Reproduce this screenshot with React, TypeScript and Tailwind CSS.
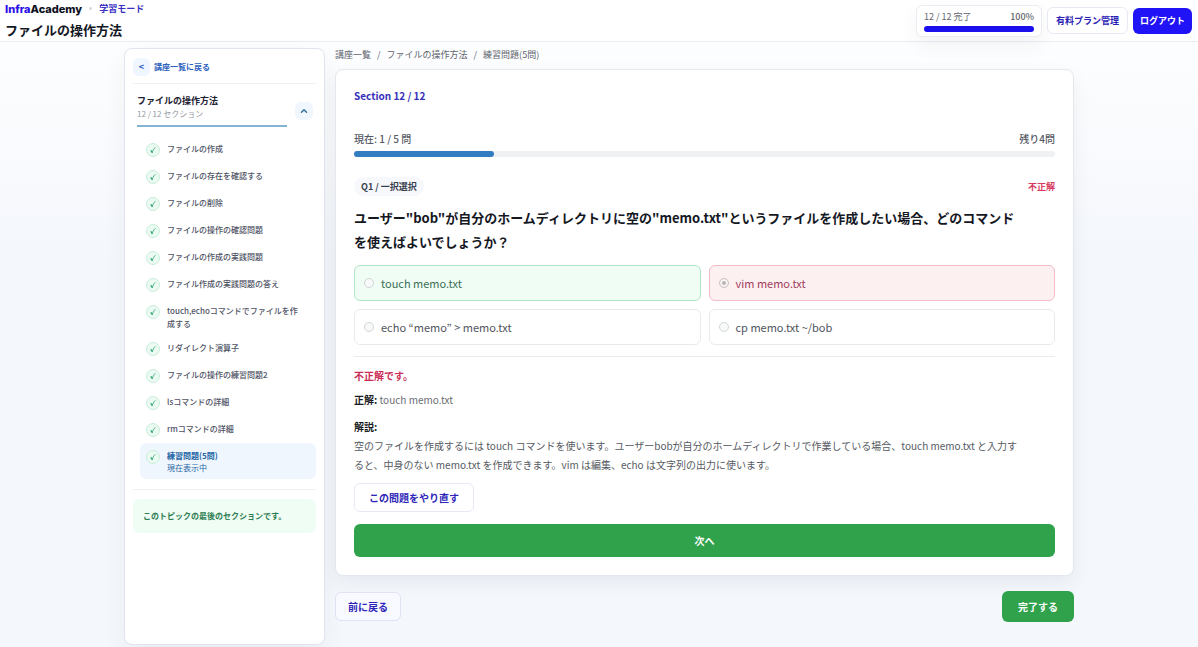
import React, { useState } from 'react';
import { ChevronUp } from 'lucide-react';
import clsx from 'clsx';

const sections = [
  'ファイルの作成',
  'ファイルの存在を確認する',
  'ファイルの削除',
  'ファイルの操作の確認問題',
  'ファイルの作成の実践問題',
  'ファイル作成の実践問題の答え',
  'touch,echoコマンドでファイルを作成する',
  'リダイレクト演算子',
  'ファイルの操作の練習問題2',
  'lsコマンドの詳細',
  'rmコマンドの詳細',
  '練習問題(5問)',
];

const options = [
  { label: 'touch memo.txt', state: 'correct' },
  { label: 'vim memo.txt', state: 'wrong' },
  { label: 'echo “memo” > memo.txt', state: 'idle' },
  { label: 'cp memo.txt ~/bob', state: 'idle' },
];

function Header() {
  return (
    <header className="flex h-[42px] items-center justify-between border-b border-[#e8edf3] bg-white pl-[5px] pr-1.5">
      <div className="pt-0.5">
        <div className="flex h-4 items-center gap-[7px]">
          <a href="#home" className="font-[Inter,sans-serif] text-[11px] font-extrabold leading-4 text-[#0f1222]">
            <span className="text-[#2a10e8]">Infra</span>Academy
          </a>
          <span className="size-[3px] rounded-full bg-[#d3d7de]" />
          <span className="text-[9px] font-bold text-[#3a32c4]">学習モード</span>
        </div>
        <h1 className="text-[13px] font-bold leading-[26px] text-[#141824]">ファイルの操作方法</h1>
      </div>

      <div className="flex items-center gap-[5px]">
        <div className="w-[126px] rounded-md border border-[#e9edf3] bg-white px-[7px] py-1 shadow-[0_8px_20px_rgba(15,23,42,0.05)]">
          <div className="flex justify-between text-[9px] leading-[14px] text-[#64666e]">
            <span>12 / 12 完了</span>
            <span className="font-medium">100%</span>
          </div>
          <div className="mt-0.5 h-1.5 rounded-full bg-[#1c0fee]" />
        </div>
        <a
          href="#plan"
          className="rounded-md border border-[#e7eaf3] bg-white px-2 py-1.5 text-[9px] font-bold leading-[13px] text-[#2a20b4]"
        >
          有料プラン管理
        </a>
        <button
          type="button"
          className="rounded-md bg-[#2013f5] px-[7px] py-1.5 text-[9px] font-bold leading-[14px] text-white"
        >
          ログアウト
        </button>
      </div>
    </header>
  );
}

function CheckMark() {
  return (
    <span className="my-px flex size-3.5 shrink-0 items-center justify-center rounded-full border border-[#c9efdb] bg-[#ebfaf2]">
      <svg viewBox="0 0 12 12" className="size-2.5" fill="none" stroke="#2ba36c" strokeLinecap="round" strokeLinejoin="round">
        <path d="M3.6 6.8 5 8.9" strokeWidth="1.4" />
        <path d="M5 8.9 C5.8 6.6 6.9 4.7 8.5 3.1" strokeWidth="1" />
      </svg>
    </span>
  );
}

function Sidebar() {
  const [open, setOpen] = useState(true);

  return (
    <aside className="min-h-[calc(100vh-50px)] w-[201px] shrink-0 rounded-lg border border-[#dfe4f0] bg-white px-2 pt-[9px] shadow-[0_8px_24px_rgba(15,23,42,0.05)]">
      <div className="border-b border-[#eff2f5] pb-[7px]">
        <a href="#courses" className="flex items-center gap-1 text-[8px] font-bold text-[#2f62c0]">
          <span className="flex h-[18px] w-[17px] items-center justify-center rounded-md bg-[#eff6ff] text-[9px]">&lt;</span>
          講座一覧に戻る
        </a>
      </div>

      <div className="flex items-center justify-between pl-1 pr-[3px] pt-2.5">
        <div className="w-[150px] border-b-2 border-[#86b5d3] pb-[5px]">
          <h2 className="text-[9px] font-bold leading-[14px] text-[#1c2030]">ファイルの操作方法</h2>
          <p className="text-[8px] leading-3 text-[#94979f]">12 / 12 セクション</p>
        </div>
        <button
          type="button"
          aria-label="セクションを開閉"
          onClick={() => setOpen(!open)}
          className="flex size-[18px] items-center justify-center rounded-md bg-[#f0f6fe] text-[#33719e]"
        >
          <ChevronUp className={clsx('size-2.5', !open && 'rotate-180')} strokeWidth={3.5} />
        </button>
      </div>

      {open && (
        <ul className="ml-[7px] mt-[9px]">
          {sections.map((name, i) => {
            const current = i === sections.length - 1;
            return (
              <li key={name}>
                <a
                  href={`#section-${i + 1}`}
                  className={clsx('flex items-start gap-[7px] rounded-md pb-[5px] pl-1.5 pr-3 pt-1.5', current && 'bg-[#f0f6fe]')}
                >
                  <CheckMark />
                  <span
                    className={clsx(
                      'text-[8px] leading-[13px]',
                      current ? 'font-bold text-[#1f66a4]' : 'font-medium text-[#4e5264]',
                    )}
                  >
                    {name}
                    {current && <span className="block text-[8px] font-normal leading-3">現在表示中</span>}
                  </span>
                </a>
              </li>
            );
          })}
        </ul>
      )}

      <div className="mt-2.5 border-t border-[#eff2f5] pt-[9px]">
        <p className="rounded-md bg-[#effdf5] px-2.5 py-2.5 text-[8px] font-bold leading-[14px] text-[#2d7c50]">
          このトピックの最後のセクションです。
        </p>
      </div>
    </aside>
  );
}

function Quiz() {
  return (
    <section className="rounded-lg border border-[#e3e8f0] bg-white p-[18px] shadow-[0_8px_20px_rgba(15,23,42,0.06)]">
      <p className="text-[10px] font-bold leading-4 text-[#3730b8]">Section 12 / 12</p>

      <div className="mt-[27px] flex justify-between text-[10px] font-medium leading-4 text-[#565a64]">
        <span>現在: 1 / 5 問</span>
        <span>残り4問</span>
      </div>
      <div className="mt-1 h-1.5 rounded-full bg-[#f0f1f3]">
        <div className="h-full w-1/5 rounded-full bg-[#327cc2]" />
      </div>

      <div className="mt-5 flex items-center justify-between">
        <span className="rounded-full bg-[#f6f8fb] px-[7px] text-[9px] font-bold leading-[19px] text-[#3b4350]">Q1 / 一択選択</span>
        <span className="text-[9px] font-bold text-[#d63a5e]">不正解</span>
      </div>

      <fieldset disabled className="mt-2.5">
        <legend className="text-[13px] font-bold leading-6 text-[#15181f]">
          ユーザー"bob"が自分のホームディレクトリに空の"memo.txt"というファイルを作成したい場合、どのコマンド
          <br />
          を使えばよいでしょうか？
        </legend>
        <div className="grid grid-cols-2 gap-2 pt-[11px]">
          {options.map((option) => (
            <label
              key={option.label}
              className={clsx(
                'flex items-center gap-[7px] rounded-md border px-[9px] py-[9px] text-[11px] leading-4',
                option.state === 'correct' && 'border-[#b3e6c8] bg-[#effdf5] text-[#3c6f55]',
                option.state === 'wrong' && 'border-[#efbcc8] bg-[#fdf0f1] text-[#a13c5c]',
                option.state === 'idle' && 'border-[#e8ebee] bg-white text-[#50545c]',
              )}
            >
              <input
                type="radio"
                name="answer"
                defaultChecked={option.state === 'wrong'}
                className="size-2.5 appearance-none rounded-full border border-[#d3d6d8] bg-[#f8f9f9] checked:border-[#d0c6c8] checked:bg-[#bcb3b5] checked:shadow-[inset_0_0_0_2px_#f8f4f4]"
              />
              {option.label}
            </label>
          ))}
        </div>
      </fieldset>

      <div className="mt-[11px] border-t border-[#e9ecef] pt-[11px] text-[10px] text-[#565a62]">
        <p className="font-bold leading-4 text-[#c92c55]">不正解です。</p>
        <p className="mt-2 leading-4 text-[#6b6e74]">
          <strong className="text-[#191c22]">正解:</strong> touch memo.txt
        </p>
        <p className="mt-[9px] font-bold leading-[19px] text-[#191c22]">解説:</p>
        <p className="leading-[19px]">
          空のファイルを作成するには touch コマンドを使います。ユーザーbobが自分のホームディレクトリで作業している場合、touch memo.txt と入力す
          <br />
          ると、中身のない memo.txt を作成できます。vim は編集、echo は文字列の出力に使います。
        </p>
      </div>

      <button
        type="button"
        className="mt-[9px] block rounded-md border border-[#e7eaf5] bg-white px-3.5 py-[5px] text-[10px] font-bold leading-[17px] text-[#2d25b8]"
      >
        この問題をやり直す
      </button>
      <button
        type="button"
        className="mt-3 block w-full rounded-md bg-[#31a24c] py-2 text-[10px] font-bold leading-[17px] text-white"
      >
        次へ
      </button>
    </section>
  );
}

export default function App() {
  return (
    <div className="min-h-screen bg-linear-to-b from-white to-[#f4f7fc] to-40% font-['Noto_Sans_CJK_JP',sans-serif]">
      <Header />
      <div className="mx-auto flex max-w-[950px] gap-2.5 pb-0.5 pt-1.5">
        <Sidebar />
        <main className="min-w-0 flex-1">
          <nav aria-label="パンくずリスト" className="mb-[7px] flex gap-1.5 text-[9px] leading-[14px] text-[#5f646e]">
            <a href="#courses">講座一覧</a>
            <span>/</span>
            <a href="#topic">ファイルの操作方法</a>
            <span>/</span>
            <span>練習問題(5問)</span>
          </nav>
          <Quiz />
          <div className="mt-[15px] flex items-center justify-between">
            <button
              type="button"
              className="rounded-md border border-[#dfe3f3] bg-[#f8faff] px-3 py-[5px] text-[10px] font-bold leading-[17px] text-[#2d25b8]"
            >
              前に戻る
            </button>
            <button type="button" className="rounded-md bg-[#31a24c] px-4 py-[7px] text-[10px] font-bold leading-[17px] text-white">
              完了する
            </button>
          </div>
        </main>
      </div>
    </div>
  );
}
